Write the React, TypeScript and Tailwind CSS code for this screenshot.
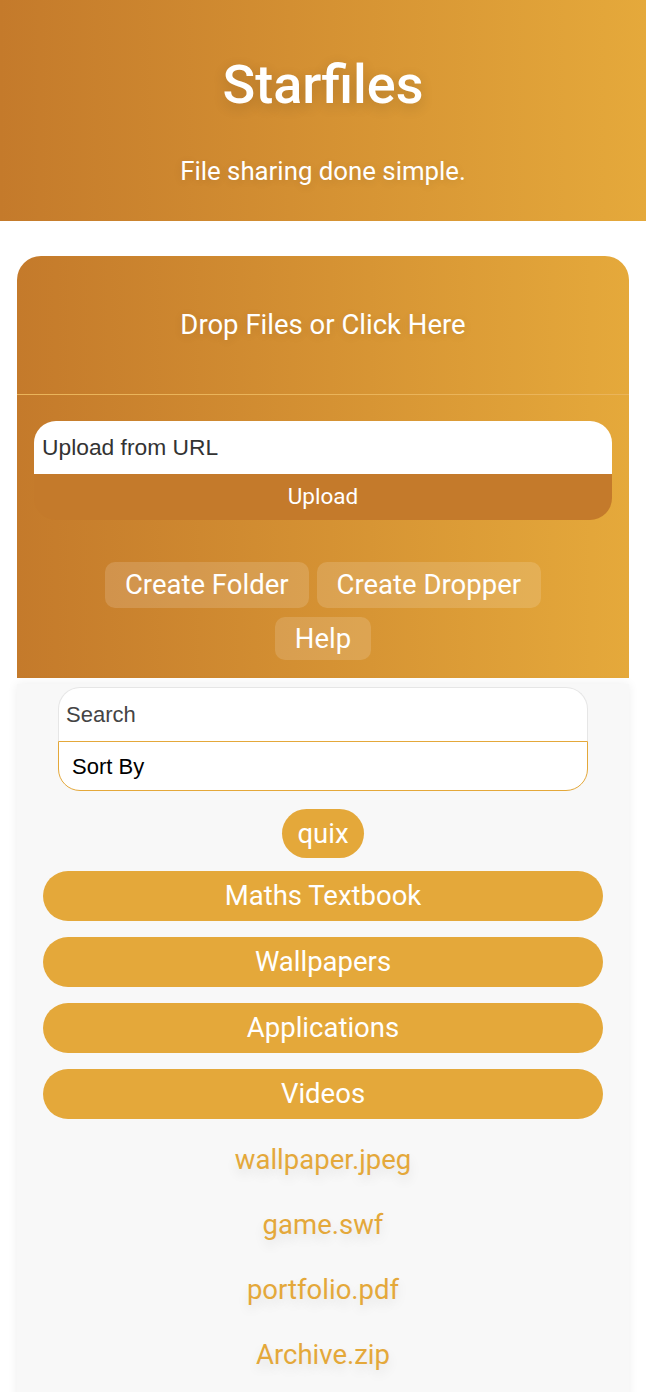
import React from "react";

const folders = ["Maths Textbook", "Wallpapers", "Applications", "Videos"];
const files = ["wallpaper.jpeg", "game.swf", "portfolio.pdf", "Archive.zip"];

export default function App() {
  return (
    <div className="min-h-[1392px] bg-white font-['Roboto',sans-serif]">
      <header className="flex h-[221px] flex-col items-center bg-linear-to-r from-[#c47a2b] to-[#e5a93b] text-white">
        <h1 className="mt-[50px] text-[54px] font-medium leading-[70px] [text-shadow:0_4px_14px_rgba(0,0,0,0.16)]">
          Starfiles
        </h1>
        <p className="mt-[36px] text-[25.8px] leading-[30px] [text-shadow:0_2px_10px_rgba(0,0,0,0.1)]">
          File sharing done simple.
        </p>
      </header>

      <section className="mx-[17px] mt-[35px] rounded-t-[24px] bg-linear-to-r from-[#c47a2b] to-[#e5a93b] pb-[18px] text-white">
        <div className="flex h-[139px] items-center justify-center border-b border-[#eab45a] pb-[1px] text-[27.5px] [text-shadow:0_2px_10px_rgba(0,0,0,0.1)]">
          Drop Files or Click Here
        </div>
        <div className="px-[17px] pt-[26px]">
          <div className="flex h-[53px] items-center rounded-t-[22px] bg-white px-[8px] font-['Liberation_Sans',Arial,sans-serif] text-[22.8px] text-[#333]">
            Upload from URL
          </div>
          <div className="flex h-[46px] items-center justify-center rounded-b-[22px] bg-[#c47a2b] text-[22.5px] text-white">
            Upload
          </div>
        </div>
        <div className="mt-[42px] flex flex-wrap justify-center gap-x-[8px] gap-y-[9px] px-[50px]">
          <button className="h-[46px] rounded-[10px] bg-white/15 px-[20px] text-[27.5px] text-white">Create Folder</button>
          <button className="h-[46px] rounded-[10px] bg-white/15 px-[20px] text-[27.5px] text-white">Create Dropper</button>
          <button className="h-[43px] rounded-[10px] bg-white/15 px-[20px] text-[27.5px] text-white">Help</button>
        </div>
      </section>

      <section className="mx-[17px] mt-[6px] bg-[#f8f8f8] px-[26px] pb-[30px] pt-[3px] shadow-[0_0_10px_rgba(0,0,0,0.07)]">
        <div className="mx-[15px]">
          <div className="flex h-[54px] items-center rounded-t-[22px] border border-b-0 border-[#e6e6e6] bg-white px-[7px] font-['Liberation_Sans',Arial,sans-serif] text-[22px] text-[#444]">
            Search
          </div>
          <div className="flex h-[50px] items-center rounded-b-[22px] border border-[#e4a83a] bg-white px-[13px] font-['Liberation_Sans',Arial,sans-serif] text-[22px] text-black">
            Sort By
          </div>
        </div>
        <div className="mt-[18px] flex justify-center">
          <div className="flex h-[49px] items-center rounded-full bg-[#e4a83a] px-[15px] text-[27.5px] text-white">quix</div>
        </div>
        <div className="mt-[13px] flex flex-col gap-[16px]">
          {folders.map((f) => (
            <div key={f} className="flex h-[50px] items-center justify-center rounded-full bg-[#e4a83a] text-[27.5px] text-white">
              {f}
            </div>
          ))}
          {files.map((f) => (
            <div key={f} className="flex h-[49px] items-center justify-center text-[27.5px] text-[#e4a83a] [text-shadow:0_6px_12px_rgba(0,0,0,0.1)]">
              {f}
            </div>
          ))}
        </div>
      </section>
    </div>
  );
}
